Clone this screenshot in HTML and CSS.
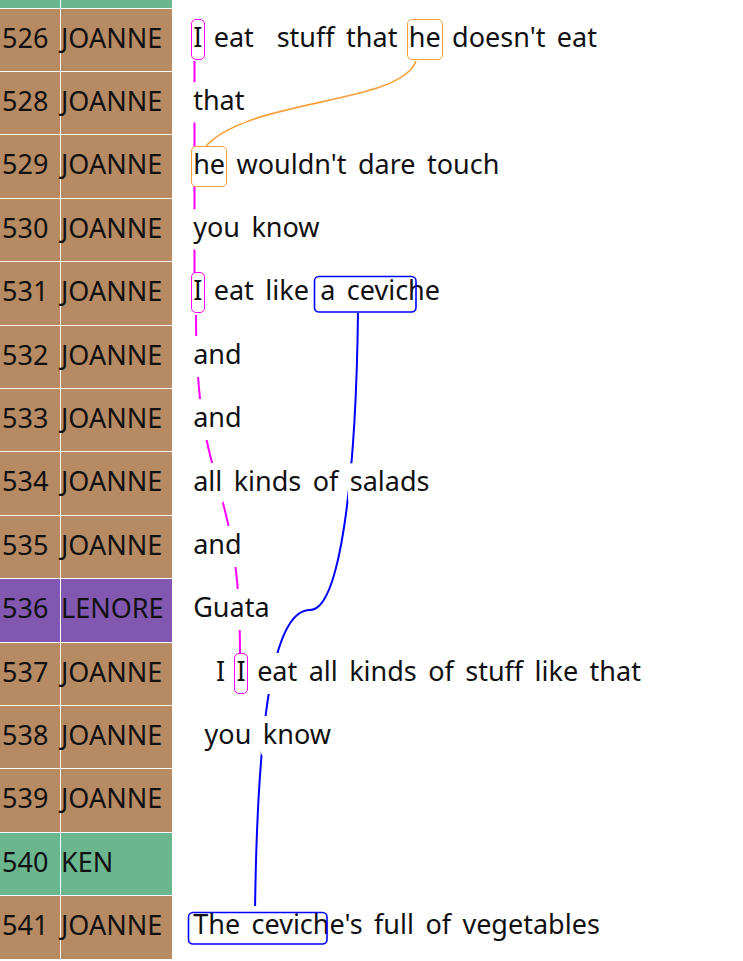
FILE: index.html
```html
<!DOCTYPE html>
<html>
<head>
<meta charset="utf-8">
<link rel="stylesheet" href="styles.css">
</head>
<body>
<div class="page">
  <svg class="links" width="743" height="961" viewBox="0 0 743 961">
    <path class="link-m" d="M194.5,61 L194.5,274"/>
    <path class="link-m" d="M196,315 C196,500 240,470 240,654"/>
    <path class="link-o" d="M416,61 C400,105 250,98 206,146"/>
    <path class="link-b" d="M358,312 C356,480 340,610 310,610 C282,610 258,670 255,912"/>
  </svg>
  <div class="transcript">
    <div class="row ken"><div class="num"></div><div class="spk"></div><div class="utt"></div></div>
    <div class="row joanne"><div class="num">526</div><div class="spk">JOANNE</div><div class="utt"><p class="line"><span class="tok box-m">I</span> <span class="tok">eat</span> <span class="tok"></span> <span class="tok">stuff</span> <span class="tok">that</span> <span class="tok box-o">he</span> <span class="tok">doesn't</span> <span class="tok">eat</span></p></div></div>
    <div class="row joanne"><div class="num">528</div><div class="spk">JOANNE</div><div class="utt"><p class="line"><span class="tok">that</span></p></div></div>
    <div class="row joanne"><div class="num">529</div><div class="spk">JOANNE</div><div class="utt"><p class="line"><span class="tok box-o">he</span> <span class="tok">wouldn't</span> <span class="tok">dare</span> <span class="tok">touch</span></p></div></div>
    <div class="row joanne"><div class="num">530</div><div class="spk">JOANNE</div><div class="utt"><p class="line"><span class="tok">you</span> <span class="tok">know</span></p></div></div>
    <div class="row joanne"><div class="num">531</div><div class="spk">JOANNE</div><div class="utt"><p class="line"><span class="tok box-m">I</span> <span class="tok">eat</span> <span class="tok">like</span> <span class="tok">a</span> <span class="tok">ceviche</span></p></div></div>
    <div class="row joanne"><div class="num">532</div><div class="spk">JOANNE</div><div class="utt"><p class="line"><span class="tok">and</span></p></div></div>
    <div class="row joanne"><div class="num">533</div><div class="spk">JOANNE</div><div class="utt"><p class="line"><span class="tok">and</span></p></div></div>
    <div class="row joanne"><div class="num">534</div><div class="spk">JOANNE</div><div class="utt"><p class="line"><span class="tok">all</span> <span class="tok">kinds</span> <span class="tok">of</span> <span class="tok">salads</span></p></div></div>
    <div class="row joanne"><div class="num">535</div><div class="spk">JOANNE</div><div class="utt"><p class="line"><span class="tok">and</span></p></div></div>
    <div class="row lenore"><div class="num">536</div><div class="spk">LENORE</div><div class="utt"><p class="line"><span class="tok">Guata</span></p></div></div>
    <div class="row joanne"><div class="num">537</div><div class="spk">JOANNE</div><div class="utt"><p class="line"><span class="tok"></span> <span class="tok"></span> <span class="tok">I</span> <span class="tok box-m">I</span> <span class="tok">eat</span> <span class="tok">all</span> <span class="tok">kinds</span> <span class="tok">of</span> <span class="tok">stuff</span> <span class="tok">like</span> <span class="tok">that</span></p></div></div>
    <div class="row joanne"><div class="num">538</div><div class="spk">JOANNE</div><div class="utt"><p class="line"><span class="tok"></span> <span class="tok">you</span> <span class="tok">know</span></p></div></div>
    <div class="row joanne"><div class="num">539</div><div class="spk">JOANNE</div><div class="utt"><p class="line"></p></div></div>
    <div class="row ken"><div class="num">540</div><div class="spk">KEN</div><div class="utt"><p class="line"></p></div></div>
    <div class="row joanne"><div class="num">541</div><div class="spk">JOANNE</div><div class="utt"><p class="line"><span class="tok">The</span> <span class="tok">ceviche's</span> <span class="tok">full</span> <span class="tok">of</span> <span class="tok">vegetables</span></p></div></div>
  </div>
  <svg class="marks" width="743" height="961" viewBox="0 0 743 961">
    <rect class="mark-b" x="314.5" y="276.5" width="101.5" height="35.5" rx="4.5"/>
    <rect class="mark-b" x="188.5" y="912.5" width="138.5" height="31.5" rx="4.5"/>
  </svg>
</div>
</body>
</html>
```
FILE: styles.css
```css
html, body {
  margin: 0;
  padding: 0;
  background: #ffffff;
}

.page {
  position: relative;
  width: 743px;
  height: 961px;
  overflow: hidden;
  font-family: "Noto Sans", "Open Sans", sans-serif;
  font-size: 27px;
  color: #111111;
}

.links,
.marks {
  position: absolute;
  left: 0;
  top: 0;
  pointer-events: none;
}

.links { z-index: 0; }
.marks { z-index: 2; }

.link-m,
.link-o,
.link-b {
  fill: none;
  stroke-width: 2;
}

.link-m { stroke: #ff00ff; }
.link-o { stroke: #f9a03c; stroke-width: 1.6; }
.link-b { stroke: #0000ff; }

.mark-b {
  fill: none;
  stroke: #0000ff;
  stroke-width: 1.6;
}

.transcript {
  position: relative;
  z-index: 1;
  margin-top: -54.7px;
  display: flex;
  flex-direction: column;
  gap: 1px;
}

.row {
  display: grid;
  grid-template-columns: 60px 111px 1fr;
  column-gap: 1px;
  height: 62.4px;
}

.num,
.spk {
  display: flex;
  align-items: center;
  white-space: nowrap;
  padding-bottom: 5.4px;
  box-sizing: border-box;
}

.num { padding-left: 2px; }
.spk { padding-left: 0; }

.joanne .num, .joanne .spk { background: #b68a63; }
.ken .num, .ken .spk { background: #6bb58f; }
.lenore .num, .lenore .spk { background: #8157b0; }

.utt {
  display: flex;
  align-items: center;
  padding-left: 18px;
}

.line {
  margin: 0;
  line-height: 42px;
  white-space: pre;
}

.tok {
  display: inline-block;
  vertical-align: top;
  line-height: 33.5px;
  padding: 0 1.2px 5.5px;
  border: 1.5px solid transparent;
  border-radius: 5px;
  background: #ffffff;
}

.box-m { border-color: #ff00ff; }
.box-o { border-color: #f9a03c; }
```
